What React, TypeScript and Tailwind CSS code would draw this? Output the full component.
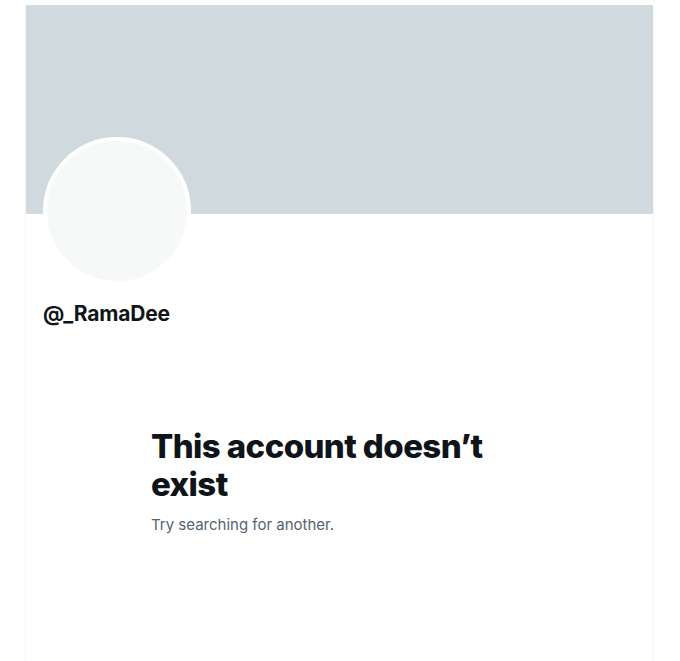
export default function App() {
  return (
    <div
      className="w-[680px] h-[661px] bg-white overflow-hidden"
      style={{ fontFamily: "Inter, 'Liberation Sans', sans-serif" }}
    >
      <div className="ml-[25px] w-[629px] h-full pt-[5px] border-x border-[#f4f6f7] flex flex-col">
        {/* Banner */}
        <div className="h-[209px] bg-[#cfd9de] shrink-0" />

        {/* Avatar + handle */}
        <div className="px-[17px]">
          <div className="-mt-[77px] w-[148px] h-[148px] rounded-full bg-[#f7f9f9] border-[4px] border-white" />
          <p className="mt-[16px] text-[21px] leading-[25px] font-bold text-[#0f1419] tracking-[-0.2px]">
            @_RamaDee
          </p>
        </div>

        {/* Empty state */}
        <div className="pl-[125px] pt-[101px]">
          <h1 className="text-[33px] leading-[38px] font-extrabold text-[#0f1419] tracking-[-0.6px] max-w-[350px]">
            This account doesn’t exist
          </h1>
          <p className="mt-[12px] text-[15px] leading-[20px] text-[#536471]">
            Try searching for another.
          </p>
        </div>
      </div>
    </div>
  );
}
